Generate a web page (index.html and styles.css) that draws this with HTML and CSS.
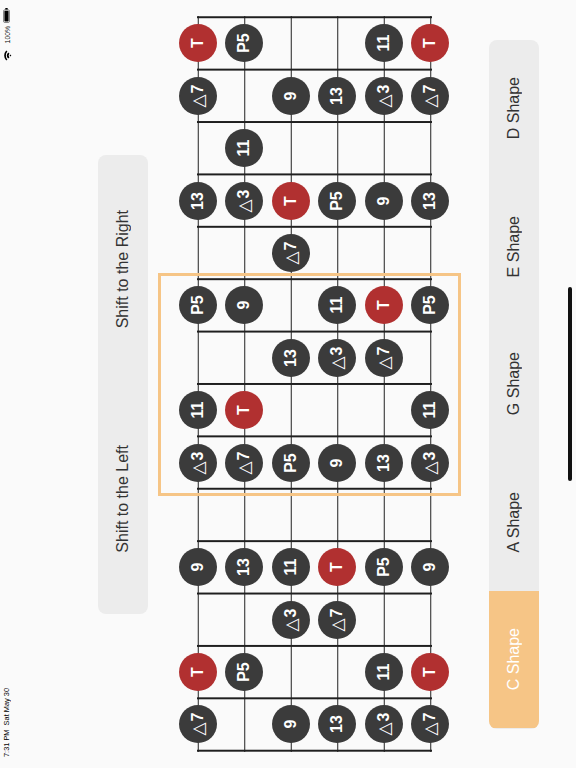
FILE: index.html
```html
<!DOCTYPE html>
<html lang="en">
<head>
<meta charset="utf-8">
<title>Chord Shapes</title>
<link rel="stylesheet" href="styles.css">
</head>
<body>
<div class="screen">
  <div class="status">
    <div class="status-top">
      <svg class="battery" width="7" height="15" viewBox="0 0 7 15">
        <rect x="2.2" y="0" width="2.6" height="1.6" rx="0.6" fill="#000"/>
        <rect x="0.5" y="1.8" width="6" height="12.7" rx="1.4" fill="none" stroke="#000" stroke-opacity="0.45" stroke-width="1"/>
        <rect x="1.4" y="2.7" width="4.2" height="10.9" rx="0.8" fill="#000"/>
      </svg>
      <span class="vtext pct">100%</span>
      <svg class="wifi" width="9" height="11" viewBox="0 0 9 11">
        <g transform="translate(0 11) rotate(-90)" fill="#000">
          <path d="M0.4 3.2 A7.4 7.4 0 0 1 10.6 3.2 L9.4 4.4 A5.7 5.7 0 0 0 1.6 4.4 Z"/>
          <path d="M2.4 5.2 A4.6 4.6 0 0 1 8.6 5.2 L7.4 6.4 A2.9 2.9 0 0 0 3.6 6.4 Z"/>
          <path d="M4.4 7.2 A1.6 1.6 0 0 1 6.6 7.2 L5.5 8.4 Z"/>
        </g>
      </svg>
    </div>
    <span class="vtext clock">7:31 PM&nbsp;&nbsp;Sat May 30</span>
  </div>

  <div class="shift">
    <div class="btn"><span class="vtext">Shift to the Right</span></div>
    <div class="btn"><span class="vtext">Shift to the Left</span></div>
  </div>

  <div class="board">
    <span class="n t">T</span><span class="n">P5</span><span></span><span></span><span class="n">11</span><span class="n t">T</span>
    <span class="n"><i>△</i>7</span><span></span><span class="n">9</span><span class="n">13</span><span class="n"><i>△</i>3</span><span class="n"><i>△</i>7</span>
    <span></span><span class="n">11</span><span></span><span></span><span></span><span></span>
    <span class="n">13</span><span class="n"><i>△</i>3</span><span class="n t">T</span><span class="n">P5</span><span class="n">9</span><span class="n">13</span>
    <span></span><span></span><span class="n"><i>△</i>7</span><span></span><span></span><span></span>
    <span class="n">P5</span><span class="n">9</span><span></span><span class="n">11</span><span class="n t">T</span><span class="n">P5</span>
    <span></span><span></span><span class="n">13</span><span class="n"><i>△</i>3</span><span class="n"><i>△</i>7</span><span></span>
    <span class="n">11</span><span class="n t">T</span><span></span><span></span><span></span><span class="n">11</span>
    <span class="n"><i>△</i>3</span><span class="n"><i>△</i>7</span><span class="n">P5</span><span class="n">9</span><span class="n">13</span><span class="n"><i>△</i>3</span>
    <span></span><span></span><span></span><span></span><span></span><span></span>
    <span class="n">9</span><span class="n">13</span><span class="n">11</span><span class="n t">T</span><span class="n">P5</span><span class="n">9</span>
    <span></span><span></span><span class="n"><i>△</i>3</span><span class="n"><i>△</i>7</span><span></span><span></span>
    <span class="n t">T</span><span class="n">P5</span><span></span><span></span><span class="n">11</span><span class="n t">T</span>
    <span class="n"><i>△</i>7</span><span></span><span class="n">9</span><span class="n">13</span><span class="n"><i>△</i>3</span><span class="n"><i>△</i>7</span>
    <div class="focus"></div>
  </div>

  <div class="shapes">
    <div class="seg"><span class="vtext">D Shape</span></div>
    <div class="seg"><span class="vtext">E Shape</span></div>
    <div class="seg"><span class="vtext">G Shape</span></div>
    <div class="seg"><span class="vtext">A Shape</span></div>
    <div class="seg on"><span class="vtext">C Shape</span></div>
  </div>

  <div class="home"></div>
</div>
</body>
</html>
```

FILE: styles.css
```css
html, body {
  margin: 0;
  padding: 0;
  background: #fafafa;
}

body {
  font-family: "Liberation Sans", Arial, "DejaVu Sans", sans-serif;
  color: #333;
}

.screen {
  width: 576px;
  height: 768px;
  display: flex;
  align-items: center;
  overflow: hidden;
}

.vtext {
  writing-mode: vertical-rl;
  text-orientation: sideways;
  transform: rotate(180deg);
  white-space: nowrap;
}

/* status bar (rotated) */
.status {
  width: 14px;
  height: 768px;
  box-sizing: border-box;
  padding: 8px 0 11px;
  display: flex;
  flex-direction: column;
  justify-content: space-between;
  align-items: center;
  color: #000;
}

.status-top {
  display: flex;
  flex-direction: column;
  align-items: center;
  gap: 3px;
}

.battery { display: block; margin-left: -1px; }

.pct {
  font-size: 6.8px;
  line-height: 7px;
}

.wifi { display: block; margin-top: 4px; }

.clock {
  font-size: 7.4px;
  line-height: 8px;
}

/* shift buttons */
.shift {
  margin-left: 84px;
  width: 50px;
  height: 459px;
  border-radius: 8px;
  background: #ececec;
  display: flex;
  flex-direction: column;
}

.btn {
  flex: 1;
  display: flex;
  align-items: center;
  justify-content: center;
  font-size: 16px;
  color: #333;
}

/* fretboard */
.board {
  position: relative;
  margin-left: 26.5px;
  width: 279px;
  height: 735.6px;
  box-sizing: border-box;
  padding: 1px 0;
  display: grid;
  grid-template-columns: repeat(6, 46.5px);
  grid-template-rows: repeat(14, 52.4px);
  background-image:
    linear-gradient(to right, transparent 22.5px, #1f1f1f 22.5px, #1f1f1f 24px, transparent 24px),
    linear-gradient(to bottom, #1f1f1f 1.5px, transparent 1.5px);
  background-size: 46.5px 100%, 234.75px 52.4px;
  background-position: 0 0, 22.5px 0.25px;
  background-repeat: repeat-x, repeat-y;
}

.n {
  place-self: center;
  width: 38px;
  height: 38px;
  border-radius: 50%;
  background: #3b3b3b;
  color: #fff;
  display: flex;
  align-items: center;
  justify-content: center;
  font-size: 16px;
  font-weight: 700;
  transform: rotate(-90deg);
}

.n i {
  font-style: normal;
  font-weight: 400;
  font-family: "DejaVu Sans", sans-serif;
  font-size: 17px;
  margin-right: 1px;
}

.n.t {
  background: #b13030;
}

.focus {
  position: absolute;
  left: -17px;
  top: 257px;
  width: 303px;
  height: 223px;
  box-sizing: border-box;
  border: 3px solid #f6c586;
}

/* shape selector */
.shapes {
  margin-left: 35.5px;
  width: 50px;
  height: 689px;
  border-radius: 8px;
  overflow: hidden;
  background: #ececec;
  display: flex;
  flex-direction: column;
}

.seg {
  flex: 1;
  display: flex;
  align-items: center;
  justify-content: center;
  font-size: 16px;
  color: #333;
}

.seg.on {
  background: #f6c586;
  color: #fff;
}

/* home indicator */
.home {
  margin-left: 29px;
  width: 4px;
  height: 194px;
  border-radius: 2px;
  background: #111;
}
```
